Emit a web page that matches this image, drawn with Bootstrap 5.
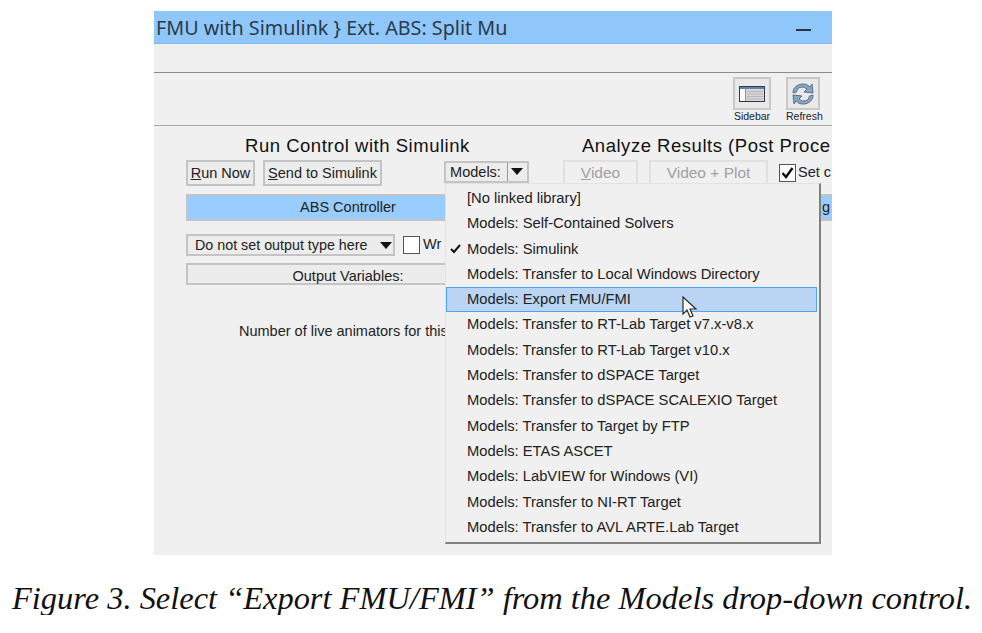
<!DOCTYPE html>
<html lang="en">
<head>
  <meta charset="UTF-8">
  <meta name="viewport" content="width=device-width, initial-scale=1.0">
  <title>Export FMU/FMI</title>
  <link href="https://cdn.jsdelivr.net/npm/bootstrap@5.3.2/dist/css/bootstrap.min.css" rel="stylesheet">
  <style>
    body {
      background: #fff;
      color: #222;
      font-family: "Liberation Sans", Arial, sans-serif;
      font-size: 14.5px;
      overflow: hidden;
    }
    .shot {
      width: 678px;
      height: 544px;
      margin: 11px 0 0 154px;
      background: #f0f0f0;
      overflow: hidden;
      position: relative;
    }
    .title-bar {
      height: 33px;
      background: #8fc7fb;
      border-bottom: 1px solid #82b8ea;
      padding-left: 2px;
      font-family: "Noto Sans", sans-serif;
      font-size: 19.75px;
      line-height: 33px;
      color: #2c3a48;
      white-space: nowrap;
    }
    .min-dash {
      width: 15px;
      height: 2px;
      background: #2a3540;
      margin: 18px 21px 0 0;
    }
    .menu-strip {
      height: 29px;
      border-bottom: 1px solid #8c8c8c;
    }
    .tool-strip {
      height: 53px;
      border-bottom: 1px solid #a8a8a8;
      padding: 4px 12px 0 0;
      gap: 15px;
    }
    .tool-box {
      height: 33px;
      background: #e9e9e9;
      border: 2px solid #c8c8c8;
    }
    .tool-label {
      font-size: 10.5px;
      line-height: 13px;
      color: #14202c;
    }
    .tool-sidebar { width: 38px; }
    .tool-refresh { width: 34px; }
    .left-side {
      width: 376px;
      padding-left: 32px;
      flex: none;
    }
    .right-side {
      width: 302px;
      flex: none;
      padding-left: 33px;
      white-space: nowrap;
    }
    .run-head {
      font-size: 18.5px;
      letter-spacing: .52px;
      line-height: 20px;
      height: 24px;
      padding-top: 10px;
      box-sizing: content-box;
      white-space: nowrap;
      color: #111;
    }
    .run-head-l { padding-left: 59px; }
    .run-head-r { padding-left: 19px; }
    .btn.win-btn {
      --bs-btn-padding-x: 0;
      --bs-btn-padding-y: 0;
      --bs-btn-font-size: 14.5px;
      --bs-btn-border-radius: 0;
      --bs-btn-color: #222;
      --bs-btn-bg: #ececec;
      --bs-btn-border-color: #c4c4c4;
      --bs-btn-border-width: 2px;
      --bs-btn-disabled-opacity: 1;
      line-height: 22px;
      white-space: nowrap;
      flex: none;
    }
    .btn.win-btn:disabled {
      color: #a0a0a0;
      background: #f0f0f0;
      border-color: #e0e0e0;
      font-size: 15.5px;
    }
    .w-run { width: 69px; height: 26px; }
    .w-send { width: 119px; height: 26px; }
    .w-models {
      width: 85px;
      height: 22px;
      margin-left: 54px;
      margin-top: 1px;
      line-height: 18px !important;
    }
    .models-sep {
      border-left: 1px solid #999;
      margin-left: 6px;
      padding-left: 3px;
      display: inline-block;
    }
    .down-tri {
      display: inline-block;
      width: 0;
      height: 0;
      border-left: 6px solid transparent;
      border-right: 6px solid transparent;
      border-top: 7px solid #111;
      vertical-align: 2px;
    }
    .video-row { gap: 11px; }
    .w-video { width: 75px; height: 26px; }
    .w-vplot { width: 119px; height: 26px; }
    .win-check {
      width: 17px;
      height: 18px;
      background: #fff;
      border: 1px solid #555;
      flex: none;
    }
    .check-text { margin-left: -9px; }
    .wr-text { margin-left: -5px; }
    .blue-bar {
      height: 27px;
      background: #99ccff;
      border: 2px solid #c4c4c4;
      text-align: center;
      line-height: 22px;
      margin-top: 8px;
    }
    .blue-bar-l { width: 324px; }
    .blue-bar-r {
      width: 280px;
      margin-left: -10px;
      border-right: 0;
      text-align: right;
      padding-right: 3px;
    }
    .type-pick {
      width: 209px;
      height: 22px;
      background: #ececec;
      border: 2px solid #c4c4c4;
      line-height: 18px;
      padding: 0 1px 0 7px;
      font-size: 14.3px;
    }
    .row-type { margin-top: 13px; }
    .bar-out {
      width: 324px;
      height: 22px;
      margin-top: 7px;
    }
    .live-line {
      margin: 37px 0 0 53px;
      line-height: 18px;
      white-space: nowrap;
    }
    .dropdown-menu.model-menu {
      --bs-dropdown-bg: #f0f0f0;
      --bs-dropdown-border-radius: 0;
      --bs-dropdown-border-width: 0;
      --bs-dropdown-padding-y: 2px;
      --bs-dropdown-font-size: 14.75px;
      --bs-dropdown-color: #222;
      --bs-dropdown-link-color: #222;
      left: 291px;
      top: 172px;
      width: 376px;
      height: 361px;
      padding-left: 0;
      padding-right: 2px;
      border-top: 1px solid #e2e2e2;
      border-left: 1px solid #e2e2e2;
      border-right: 2px solid #808080;
      border-bottom: 2px solid #808080;
      box-shadow: none;
    }
    .model-menu .dropdown-item {
      height: 25.3px;
      line-height: 23.3px;
      padding: 0 0 0 20px;
      border: 1px solid transparent;
      color: #222;
      white-space: nowrap;
      position: relative;
    }
    .model-menu .dropdown-item.active {
      background: #b9d5f3;
      border-color: #4ba6f6;
      color: #222;
    }
    .tick {
      position: absolute;
      left: 3px;
      top: 6px;
    }
    .arrow-cursor {
      position: absolute;
      left: 528px;
      top: 285px;
      z-index: 1001;
    }
    .figure-note {
      font-family: "Liberation Serif", "Times New Roman", serif;
      font-style: italic;
      font-size: 32.45px;
      line-height: 34px;
      color: #111;
      margin: 26px 0 0 12px;
      white-space: nowrap;
    }
  </style>
</head>
<body>

  <div class="shot">
    <div class="title-bar d-flex justify-content-between">
      <span>FMU with Simulink } Ext. ABS: Split Mu</span>
      <div class="min-dash"></div>
    </div>
    <div class="menu-strip"></div>

    <div class="tool-strip d-flex justify-content-end">
      <div class="tool-sidebar text-center">
        <div class="tool-box d-flex align-items-center justify-content-center">
          <svg width="26" height="16" viewBox="0 0 26 16">
            <rect x="0.500" y="0.500" width="25" height="15" fill="#fff" stroke="#2f3a48"/>
            <rect x="1" y="1" width="24" height="2" fill="#5f86b0"/>
            <rect x="7" y="3" width="18" height="12" fill="#d6d6d6"/>
            <path d="M8 5.500h16M8 8h16M8 10.500h16M8 13h16" stroke="#b8b8b8"/>
            <path d="M6.500 3v12" stroke="#8a94a0"/>
          </svg>
        </div>
        <div class="tool-label">Sidebar</div>
      </div>
      <div class="tool-refresh text-center">
        <div class="tool-box d-flex align-items-center justify-content-center">
          <svg width="26" height="26" viewBox="0 0 26 26">
            <path d="M3 12C3 6 8 3 13 3c3 0 5 1 7 3l2-3 1 9-9-1 3-3c-1.500-1-3-2-5-2-3 0-5 2-5.500 5z" fill="#86a6c6" stroke="#5c6f84" stroke-width="1"/>
            <path d="M23 14c0 6-5 9-10 9-3 0-5-1-7-3l-2 3-1-9 9 1-3 3c1.500 1 3 2 5 2 3 0 5-2 5.500-5z" fill="#86a6c6" stroke="#5c6f84" stroke-width="1"/>
          </svg>
        </div>
        <div class="tool-label">Refresh</div>
      </div>
    </div>

    <div class="d-flex">
      <div class="left-side">
        <div class="run-head run-head-l">Run Control with Simulink</div>
        <div class="d-flex gap-2">
          <button class="btn win-btn w-run"><u>R</u>un Now</button>
          <button class="btn win-btn w-send"><u>S</u>end to Simulink</button>
          <button class="btn win-btn w-models">Models:<span class="models-sep"><span class="down-tri"></span></span></button>
        </div>
        <div class="blue-bar blue-bar-l">ABS Controller</div>
        <div class="row-type d-flex align-items-center gap-2">
          <div class="type-pick d-flex justify-content-between align-items-center">
            <span>Do not set output type here</span><span class="down-tri"></span>
          </div>
          <div class="win-check"></div>
          <span class="wr-text">Wr</span>
        </div>
        <button class="btn win-btn bar-out d-block">Output Variables:</button>
        <div class="live-line">Number of live animators for this</div>
      </div>

      <div class="right-side">
        <div class="run-head run-head-r">Analyze Results (Post Proce</div>
        <div class="d-flex video-row align-items-center">
          <button class="btn win-btn w-video" disabled><u>V</u>ideo</button>
          <button class="btn win-btn w-vplot" disabled>Video + Plot</button>
          <div class="win-check d-flex align-items-center justify-content-center">
            <svg width="13" height="12" viewBox="0 0 13 12"><path d="M1.500 6l3.500 4 6.500-9" fill="none" stroke="#111" stroke-width="2.400"/></svg>
          </div>
          <span class="check-text">Set c</span>
        </div>
        <div class="blue-bar blue-bar-r">g</div>
      </div>
    </div>

    <ul class="dropdown-menu show model-menu">
      <li><a class="dropdown-item" href="#">[No linked library]</a></li>
      <li><a class="dropdown-item" href="#">Models: Self-Contained Solvers</a></li>
      <li><a class="dropdown-item" href="#"><svg class="tick" width="11" height="10" viewBox="0 0 11 10"><path d="M1 5l3 3 6-7" fill="none" stroke="#111" stroke-width="2"/></svg>Models: Simulink</a></li>
      <li><a class="dropdown-item" href="#">Models: Transfer to Local Windows Directory</a></li>
      <li><a class="dropdown-item active" href="#">Models: Export FMU/FMI</a></li>
      <li><a class="dropdown-item" href="#">Models: Transfer to RT-Lab Target v7.x-v8.x</a></li>
      <li><a class="dropdown-item" href="#">Models: Transfer to RT-Lab Target v10.x</a></li>
      <li><a class="dropdown-item" href="#">Models: Transfer to dSPACE Target</a></li>
      <li><a class="dropdown-item" href="#">Models: Transfer to dSPACE SCALEXIO Target</a></li>
      <li><a class="dropdown-item" href="#">Models: Transfer to Target by FTP</a></li>
      <li><a class="dropdown-item" href="#">Models: ETAS ASCET</a></li>
      <li><a class="dropdown-item" href="#">Models: LabVIEW for Windows (VI)</a></li>
      <li><a class="dropdown-item" href="#">Models: Transfer to NI-RT Target</a></li>
      <li><a class="dropdown-item" href="#">Models: Transfer to AVL ARTE.Lab Target</a></li>
    </ul>

    <svg class="arrow-cursor" width="16" height="24" viewBox="0 0 16 24">
      <path d="M1 1v17l4-4 3 7 3-1-3-7h6z" fill="#fff" stroke="#2a2a2a" stroke-width="1.200"/>
    </svg>
  </div>

  <div class="figure-note">Figure 3. Select “Export FMU/FMI” from the Models drop-down control.</div>

  <script src="https://cdn.jsdelivr.net/npm/bootstrap@5.3.2/dist/js/bootstrap.bundle.min.js"></script>
</body>
</html>
